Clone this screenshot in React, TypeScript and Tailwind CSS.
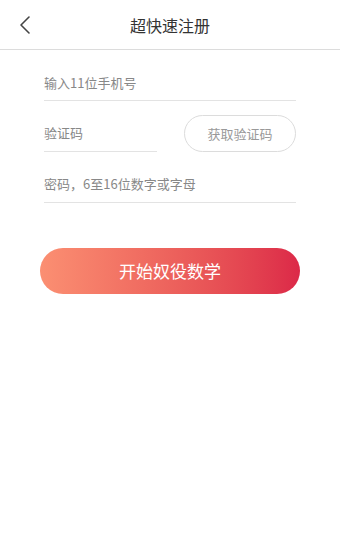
export default function App() {
  const font = { fontFamily: '"Noto Sans CJK SC", "Noto Sans", sans-serif' }
  return (
    <div className="w-[340px] h-[539px] bg-white" style={font}>
      <div className="h-[50px] flex items-center px-[18px] border-b border-[#dcdcdc]">
        <svg width="14" height="20" viewBox="0 0 14 20" fill="none">
          <path d="M11 2 L3 10 L11 18" stroke="#444" strokeWidth="1.6" strokeLinecap="round" strokeLinejoin="round" />
        </svg>
        <span className="flex-1 text-center text-[16px] text-[#333] mr-[14px]">超快速注册</span>
      </div>

      <div className="px-[44px] flex flex-col">
        <div className="h-[51px] flex items-end pb-[8px] border-b border-[#e3e3e3] text-[13px] leading-[18px] text-[#888]">
          输入11位手机号
        </div>

        <div className="flex items-end justify-between mt-[14px]">
          <div className="w-[113px] h-[36px] flex items-center pb-[2px] border-b border-[#e3e3e3] text-[13px] text-[#888]">
            验证码
          </div>
          <div className="w-[112px] h-[37px] rounded-full border border-[#dcdcdc] flex items-center justify-center text-[13px] text-[#999]">
            获取验证码
          </div>
        </div>

        <div className="h-[51px] flex items-end pb-[9px] border-b border-[#e3e3e3] text-[13px] leading-[18px] text-[#888]">
          密码，6至16位数字或字母
        </div>
      </div>

      <div className="px-[40px] mt-[45px]">
        <div className="h-[46px] rounded-full bg-gradient-to-r from-[#fb8f72] to-[#dc2848] flex items-center justify-center text-white text-[17px]">
          开始奴役数学
        </div>
      </div>
    </div>
  )
}
